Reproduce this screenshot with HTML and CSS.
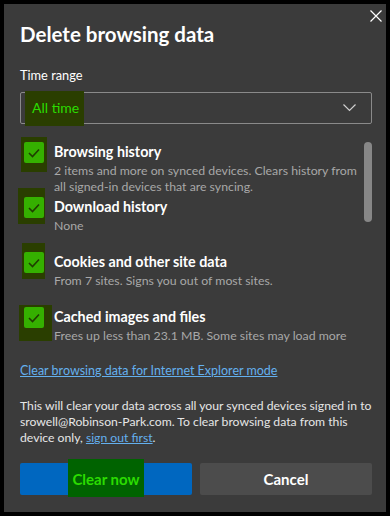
FILE: index.html
```html
<!DOCTYPE html>
<html lang="en">
<head>
<meta charset="utf-8">
<title>Delete browsing data</title>
<link rel="stylesheet" href="styles.css">
</head>
<body>
<div class="dialog">
  <button class="close" aria-label="Close">
    <svg width="12" height="12" viewBox="0 0 12 12"><path d="M0.5 0.5L11.5 11.5M11.5 0.5L0.5 11.5" stroke="#fff" stroke-width="1.2" fill="none"/></svg>
  </button>
  <h1 class="title">Delete browsing data</h1>
  <div class="field-label">Time range</div>
  <div class="select">
    <span class="select-value"><span class="hl hl-select"></span><span class="green-text">All time</span></span>
    <svg class="chevron" width="13" height="8" viewBox="0 0 13 8"><path d="M0.5 0.5L6.5 6.5L12.5 0.5" stroke="#d0d0d0" stroke-width="1.2" fill="none"/></svg>
  </div>
  <div class="list">
    <div class="items">
      <div class="item">
        <div class="check-cell"><span class="hl hl-c1"></span><span class="box"><svg width="12" height="10" viewBox="0 0 12 10"><path d="M1 5L4.5 8.5L11 1.5" stroke="#1f3d00" stroke-width="1.6" fill="none"/></svg></span></div>
        <div class="text">
          <div class="name">Browsing history</div>
          <div class="desc">2 items and more on synced devices. Clears history from all signed-in devices that are syncing.</div>
        </div>
      </div>
      <div class="item">
        <div class="check-cell"><span class="hl hl-c2"></span><span class="box"><svg width="12" height="10" viewBox="0 0 12 10"><path d="M1 5L4.5 8.5L11 1.5" stroke="#1f3d00" stroke-width="1.6" fill="none"/></svg></span></div>
        <div class="text">
          <div class="name">Download history</div>
          <div class="desc">None</div>
        </div>
      </div>
      <div class="item">
        <div class="check-cell"><span class="hl hl-c3"></span><span class="box"><svg width="12" height="10" viewBox="0 0 12 10"><path d="M1 5L4.5 8.5L11 1.5" stroke="#1f3d00" stroke-width="1.6" fill="none"/></svg></span></div>
        <div class="text">
          <div class="name">Cookies and other site data</div>
          <div class="desc">From 7 sites. Signs you out of most sites.</div>
        </div>
      </div>
      <div class="item">
        <div class="check-cell"><span class="hl hl-c4"></span><span class="box"><svg width="12" height="10" viewBox="0 0 12 10"><path d="M1 5L4.5 8.5L11 1.5" stroke="#1f3d00" stroke-width="1.6" fill="none"/></svg></span></div>
        <div class="text">
          <div class="name">Cached images and files</div>
          <div class="desc">Frees up less than 23.1 MB. Some sites may load more</div>
        </div>
      </div>
    </div>
    <div class="scrollbar"><span class="thumb"></span></div>
  </div>
  <a class="ie-link" href="#">Clear browsing data for Internet Explorer mode</a>
  <p class="note">This will clear your data across all your synced devices signed in to srowell@Robinson-Park.com. To clear browsing data from this device only, <a href="#">sign out first</a>.</p>
  <div class="actions">
    <button class="btn primary"><span class="hl hl-btn"></span><span class="green-text">Clear now</span></button>
    <button class="btn secondary">Cancel</button>
  </div>
</div>
</body>
</html>
```

FILE: styles.css
```css
* { box-sizing: border-box; }
html, body { margin: 0; padding: 0; }
body {
  background: #000;
  width: 390px;
  height: 516px;
  padding: 4px;
  font-family: Lato, "Noto Sans", sans-serif;
  color: #fff;
}
.dialog {
  position: relative;
  width: 382px;
  height: 508px;
  background: #3b3b3b;
  padding: 16px 14px 0 16px;
  display: flex;
  flex-direction: column;
}
.close {
  position: absolute;
  top: 6px;
  right: 4px;
  width: 12px;
  height: 12px;
  padding: 0;
  border: 0;
  background: none;
  display: flex;
}
.title {
  margin: 0;
  font-size: 20.5px;
  line-height: 28px;
  font-weight: 700;
}
.field-label {
  margin-top: 18px;
  font-size: 12.8px;
  line-height: 18px;
}
.select {
  margin-top: 8px;
  height: 32px;
  border: 1px solid #8a8a8a;
  border-radius: 2px;
  display: flex;
  align-items: center;
  justify-content: space-between;
  padding: 0 15px 0 11px;
}
.select-value { position: relative; font-size: 14px; line-height: 20px; }
.green-text { position: relative; color: #2bdc00; }
.hl { position: absolute; background: #2a3e00; }
.hl-select { left: -7px; top: -7px; width: 59px; height: 35px; }
.chevron { display: block; }
.list {
  margin-top: 18px;
  display: flex;
  justify-content: space-between;
}
.items { display: flex; flex-direction: column; flex: 1; }
.item {
  height: 55px;
  display: flex;
  gap: 10px;
}
.check-cell {
  position: relative;
  padding-left: 4px;
  flex: none;
}
.box {
  position: relative;
  width: 20px;
  height: 21px;
  border-radius: 2px;
  background: #35b000;
  display: flex;
  align-items: center;
  justify-content: center;
}
.hl-c1 { left: 1px; top: -5px; width: 26px; height: 35px; }
.hl-c2 { left: -2px; top: -9px; width: 27px; height: 36px; }
.hl-c3 { left: 2px; top: -9px; width: 23px; height: 36px; }
.hl-c4 { left: -1px; top: -2px; width: 33px; height: 36px; }
.text { flex: 1; }
.name {
  font-size: 14.3px;
  line-height: 20px;
  font-weight: 700;
}
.desc {
  margin-top: 1px;
  font-size: 12.3px;
  line-height: 16px;
  color: #a8a8a8;
}
.scrollbar { width: 8px; flex: none; }
.thumb {
  display: block;
  width: 8px;
  height: 80px;
  border-radius: 4px;
  background: #878787;
}
.ie-link {
  align-self: flex-start;
  font-size: 12.5px;
  line-height: 18px;
  color: #64b0ee;
}
.note {
  margin: 18px 0 0;
  font-size: 12.2px;
  line-height: 16px;
  color: #e6e6e6;
}
.note a { color: #64b0ee; }
.actions {
  margin-top: 17px;
  display: flex;
  gap: 8px;
}
.btn {
  position: relative;
  flex: 1;
  height: 32px;
  border: 0;
  border-radius: 2px;
  font-family: inherit;
  font-size: 15px;
  font-weight: 700;
  display: flex;
  align-items: center;
  justify-content: center;
}
.primary { background: #0067c0; }
.secondary { background: #4c4c4c; color: #fff; }
.hl-btn { background: #006300; left: 48px; top: -4px; width: 76px; height: 38px; }
```
